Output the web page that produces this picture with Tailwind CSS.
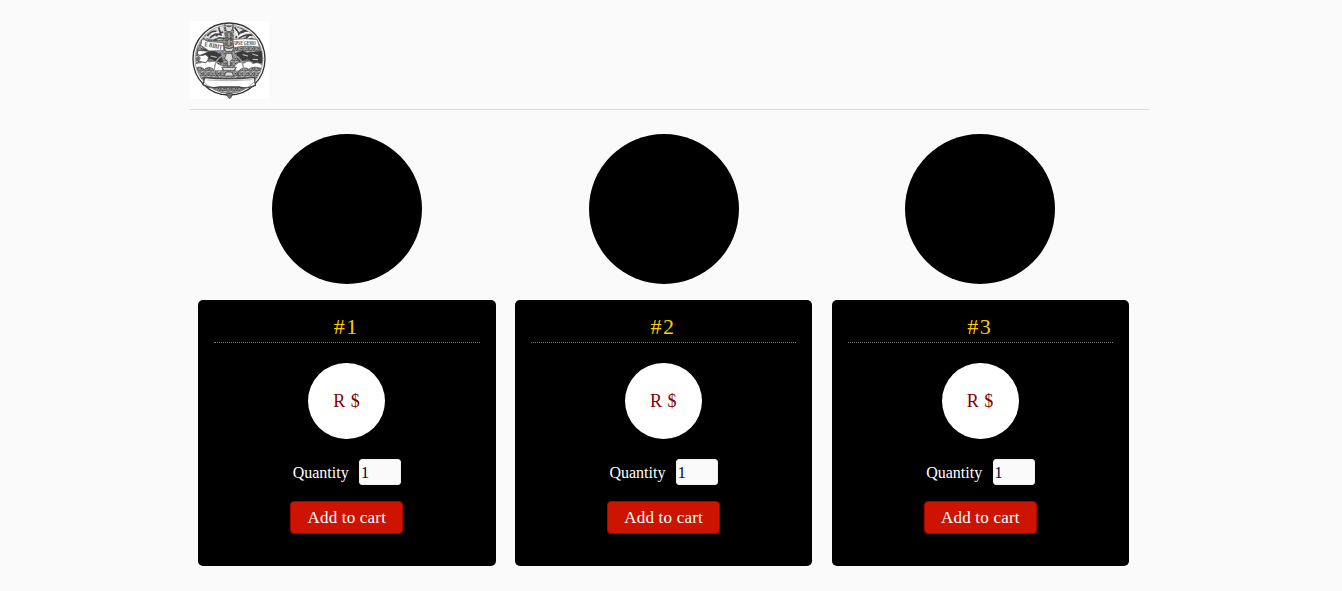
<!DOCTYPE html>
<html lang="en">
<head>
<meta charset="utf-8">
<title>Shop</title>
<script src="https://cdn.jsdelivr.net/npm/@tailwindcss/browser@4"></script>
</head>
<body class="bg-[#fafafa] font-['Liberation_Serif',serif] h-[591px] overflow-hidden">
<div class="ml-[189px] w-[960px]">
  <header class="h-[110px] pt-[21px] border-b border-[#dddddd]">
    <svg class="block w-[80px] h-[78px]" viewBox="15 15 240 234">
      <defs>
        <pattern id="leaf" width="17" height="15" patternUnits="userSpaceOnUse">
          <rect width="17" height="15" fill="#8c8c8c"/>
          <path d="M0 9Q5 0 9 8T17 5M3 15Q8 7 16 13" fill="none" stroke="#333" stroke-width="2.6"/>
          <path d="M1 4L7 1M10 11L16 8" stroke="#eee" stroke-width="2.5"/>
        </pattern>
        <clipPath id="disc"><circle cx="135" cy="129" r="101"/></clipPath>
      </defs>
      <rect x="15" y="15" width="240" height="234" fill="#fff"/>
      <circle cx="135" cy="129" r="108" fill="#fff" stroke="#333" stroke-width="4"/>
      <g clip-path="url(#disc)">
        <rect x="24" y="20" width="222" height="218" fill="url(#leaf)"/>
        <!-- sky behind the foliage -->
        <path d="M84 40L118 28 122 62 108 72 60 66ZM150 30L205 55 225 78 150 72Z" fill="#ddd"/>
        <g fill="none" stroke="#444" stroke-width="5">
          <path d="M70 60Q80 44 98 46M78 66Q94 50 112 56M90 74Q104 60 121 68M88 44L104 66M104 34L112 62M118 48L100 52M155 66Q170 42 188 42M164 68Q186 52 206 58M180 68Q200 62 218 76M152 34L166 54M170 50L196 44M186 64L210 52"/>
        </g>
        <g fill="none" stroke="#fff" stroke-width="4">
          <path d="M84 54Q96 46 106 51M96 66Q106 58 118 63M168 60Q184 46 196 50M156 46L162 62M188 70L200 62"/>
        </g>
        <path d="M36 105L75 96 112 116 118 140 100 138 84 130 56 124Z" fill="#3a3a3a"/>
        <path d="M156 112L176 104 190 110 238 104 238 142 208 140 192 130 166 138Z" fill="#3a3a3a"/>
        <path d="M80 120L98 124M176 116L192 120M205 114L222 119M206 130L222 131" stroke="#bbb" stroke-width="3.5"/>
        <path d="M31 155Q30 139 50 141Q60 127 76 138Q95 132 103 145L120 151 114 164H45ZM151 151Q165 132 180 142Q196 129 207 143Q228 134 239 155L213 165H155Z" fill="#fff" stroke="#666" stroke-width="2"/>
        <path d="M29 163Q43 145 61 160Q77 148 91 162L104 186H40ZM165 164Q179 150 194 160Q213 146 240 162L226 186H162Z" fill="url(#leaf)" stroke="#555" stroke-width="2.5"/>
        <path d="M91 177Q87 119 135 114Q183 119 179 177" fill="none" stroke="#999" stroke-width="4"/>
      </g>
      <!-- motto ribbon -->
      <path d="M55 68L71 76 118 80 120 104 75 105 50 88Z" fill="#fff" stroke="#555" stroke-width="2.5"/>
      <path d="M147 70Q184 66 219 70L227 94Q182 86 149 96Z" fill="#fff" stroke="#555" stroke-width="2.5"/>
      <path d="M76 106L44 103Q34 113 49 119L64 116Q82 122 66 140L42 136Q55 127 42 119" fill="#fff" stroke="#555" stroke-width="3"/>
      <g font-family="Liberation Serif, serif" font-weight="700" fill="#444">
        <text x="61" y="91" font-size="20" transform="rotate(10 61 91)" textLength="54" lengthAdjust="spacingAndGlyphs">E BIBIT</text>
        <text x="151" y="87" font-size="18" textLength="64" lengthAdjust="spacingAndGlyphs">IPSE GEMO</text>
      </g>
      <!-- central fountain -->
      <g stroke="#444" stroke-width="2.5" fill="#ddd">
        <path d="M122 25Q135 40 148 25L144 43Q135 52 126 43ZM132 48H138V90H132ZM120 92Q135 104 150 92L145 106H125ZM127 112H143L147 128 139 136 139 150H131V136L122 128ZM113 154H157L149 164H121ZM127 168H143L149 180H120Z"/>
        <path d="M124 62L146 72M146 60L124 78" fill="none"/>
      </g>
      <!-- blank cartouche -->
      <path d="M62 185Q135 193 211 184L214 208Q190 220 165 213H105Q80 220 57 206Z" fill="#fff" stroke="#444" stroke-width="4"/>
      <path d="M70 192Q135 197 205 191" fill="none" stroke="#888" stroke-width="2"/>
      <path d="M88 219Q135 225 183 219Q162 232 135 233Q109 231 88 219Z" fill="url(#leaf)" stroke="#777" stroke-width="2"/>
      <circle cx="135" cy="129" r="102" fill="none" stroke="#888" stroke-width="2"/>
      <path d="M125 236Q136 226 147 236L141 239 143 243 137 248 131 243 133 239Z" fill="#777" stroke="#333" stroke-width="2"/>
    </svg>
  </header>

  <main class="flex gap-[19.2px] pl-[9px] pt-6">
    <section class="w-[297.6px] shrink-0">
      <div class="mx-auto size-[150px] rounded-full bg-black"></div>
      <div class="mt-4 h-[266px] rounded-[5px] bg-black px-4 pt-3 flex flex-col items-center">
        <h2 class="w-full h-[31px] pr-px border-b border-dotted border-[#777] text-center text-[22px] leading-[30px] tracking-[1.6px] text-[#ffcc00]">#1</h2>
        <div class="mt-5 w-[77px] h-[76px] rounded-full bg-white flex items-center justify-center text-[18px] tracking-[0.5px] text-[#800000]">R $</div>
        <div class="mt-5 flex h-[26px] items-center gap-[10.3px]">
          <label class="w-[56px] pt-0.5 text-[16px] leading-6 whitespace-nowrap text-white">Quantity</label>
          <div class="w-[42px] h-[26px] rounded-[3px] border border-[#eee] bg-[#fafafa] pl-px pt-px text-[16px] leading-6 text-[#000033]">1</div>
        </div>
        <button class="mt-4 w-[113px] h-[33px] rounded-[4px] border border-[#aa0000] bg-[#cc1400] text-[17px] leading-[31px] tracking-[0.2px] whitespace-nowrap text-white">Add to cart</button>
      </div>
    </section>
    <section class="w-[297.6px] shrink-0">
      <div class="mx-auto size-[150px] rounded-full bg-black"></div>
      <div class="mt-4 h-[266px] rounded-[5px] bg-black px-4 pt-3 flex flex-col items-center">
        <h2 class="w-full h-[31px] pr-px border-b border-dotted border-[#777] text-center text-[22px] leading-[30px] tracking-[1.6px] text-[#ffcc00]">#2</h2>
        <div class="mt-5 w-[77px] h-[76px] rounded-full bg-white flex items-center justify-center text-[18px] tracking-[0.5px] text-[#800000]">R $</div>
        <div class="mt-5 flex h-[26px] items-center gap-[10.3px]">
          <label class="w-[56px] pt-0.5 text-[16px] leading-6 whitespace-nowrap text-white">Quantity</label>
          <div class="w-[42px] h-[26px] rounded-[3px] border border-[#eee] bg-[#fafafa] pl-px pt-px text-[16px] leading-6 text-[#000033]">1</div>
        </div>
        <button class="mt-4 w-[113px] h-[33px] rounded-[4px] border border-[#aa0000] bg-[#cc1400] text-[17px] leading-[31px] tracking-[0.2px] whitespace-nowrap text-white">Add to cart</button>
      </div>
    </section>
    <section class="w-[297.6px] shrink-0">
      <div class="mx-auto size-[150px] rounded-full bg-black"></div>
      <div class="mt-4 h-[266px] rounded-[5px] bg-black px-4 pt-3 flex flex-col items-center">
        <h2 class="w-full h-[31px] pr-px border-b border-dotted border-[#777] text-center text-[22px] leading-[30px] tracking-[1.6px] text-[#ffcc00]">#3</h2>
        <div class="mt-5 w-[77px] h-[76px] rounded-full bg-white flex items-center justify-center text-[18px] tracking-[0.5px] text-[#800000]">R $</div>
        <div class="mt-5 flex h-[26px] items-center gap-[10.3px]">
          <label class="w-[56px] pt-0.5 text-[16px] leading-6 whitespace-nowrap text-white">Quantity</label>
          <div class="w-[42px] h-[26px] rounded-[3px] border border-[#eee] bg-[#fafafa] pl-px pt-px text-[16px] leading-6 text-[#000033]">1</div>
        </div>
        <button class="mt-4 w-[113px] h-[33px] rounded-[4px] border border-[#aa0000] bg-[#cc1400] text-[17px] leading-[31px] tracking-[0.2px] whitespace-nowrap text-white">Add to cart</button>
      </div>
    </section>
  </main>
</div>
</body>
</html>
